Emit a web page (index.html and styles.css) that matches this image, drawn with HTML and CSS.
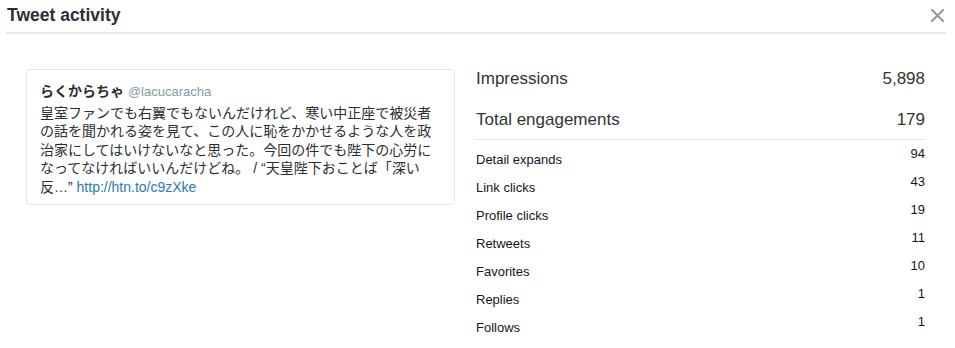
FILE: index.html
```html
<!DOCTYPE html>
<html lang="ja">
<head>
    <meta charset="UTF-8">
    <meta name="viewport" content="width=device-width, initial-scale=1.0">
    <title>Tweet activity</title>

    <link rel="stylesheet" href="styles.css">
</head>
<body>
    <div class="modal">
        <header class="modal-header">
            <h2 class="modal-title">Tweet activity</h2>
            <button class="close-btn" type="button" aria-label="Close">
                <svg width="13" height="13" viewBox="0 0 13 13"><path d="M1 1 L12 12 M12 1 L1 12" stroke="#8899a6" stroke-width="2" stroke-linecap="round"/></svg>
            </button>
        </header>
        <div class="modal-body">
            <div class="tweet">
                <div class="tweet-user">
                    <span class="fullname">らくからちゃ</span>
                    <span class="username">@lacucaracha</span>
                </div>
                <p class="tweet-text">皇室ファンでも右翼でもないんだけれど、寒い中正座で被災者の話を聞かれる姿を見て、この人に恥をかかせるような人を政治家にしてはいけないなと思った。今回の件でも陛下の心労になってなければいいんだけどね。 / “天皇陛下おことば「深い反…” <a href="#">http://htn.to/c9zXke</a></p>
            </div>
            <div class="stats">
                <div class="main-metric">
                    <span>Impressions</span>
                    <span>5,898</span>
                </div>
                <div class="main-metric total">
                    <span>Total engagements</span>
                    <span>179</span>
                </div>
                <ul class="detail-list">
                    <li><span class="label">Detail expands</span><span class="count">94</span></li>
                    <li><span class="label">Link clicks</span><span class="count">43</span></li>
                    <li><span class="label">Profile clicks</span><span class="count">19</span></li>
                    <li><span class="label">Retweets</span><span class="count">11</span></li>
                    <li><span class="label">Favorites</span><span class="count">10</span></li>
                    <li><span class="label">Replies</span><span class="count">1</span></li>
                    <li><span class="label">Follows</span><span class="count">1</span></li>
                </ul>
            </div>
        </div>
    </div>
</body>
</html>
```

FILE: styles.css
```css
*{
    margin: 0;
    padding: 0;
    box-sizing: border-box;
}
body{
    background: #fff;
    font-family: "Liberation Sans", Arial, "Noto Sans CJK JP", sans-serif;
    color: #292f33;
}
.modal-header{
    display: flex;
    align-items: center;
    justify-content: space-between;
    height: 34px;
    margin: 0 9px 0 6px;
    padding: 0 2px 2px 1px;
    border-bottom: 2px solid #e1e8ed;
}
.modal-title{
    font-size: 17.5px;
    font-weight: bold;
    color: #292f33;
    line-height: 22px;
}
.close-btn{
    border: none;
    background: none;
    width: 13px;
    height: 13px;
    display: flex;
    cursor: pointer;
}
.modal-body{
    display: flex;
    align-items: flex-start;
    gap: 21px;
    padding: 35px 30px 0 26px;
}
.tweet{
    width: 429px;
    border: 1px solid #e1e8ed;
    border-radius: 4px;
    padding: 12px 21px 8px 13px;
    font-size: 14px;
    line-height: 18.5px;
}
.tweet .fullname{
    font-weight: bold;
    color: #292f33;
}
.tweet .username{
    font-size: 13px;
    color: #8899a6;
}
.tweet-text{
    margin-top: 2px;
    color: #292f33;
}
.tweet-text a{
    color: #2b7bb9;
    text-decoration: none;
}
.stats{
    flex: 1;
}
.main-metric{
    display: flex;
    justify-content: space-between;
    font-size: 17px;
    line-height: 20px;
    color: #333;
    margin-bottom: 21px;
}
.main-metric.total{
    margin-bottom: 0;
    padding-bottom: 9px;
    border-bottom: 1px solid #e1e8ed;
}
.detail-list{
    list-style: none;
}
.detail-list li{
    display: flex;
    justify-content: space-between;
    align-items: flex-start;
    height: 28px;
    font-size: 13px;
    line-height: 16px;
    color: #14171a;
}
.detail-list .label{
    padding-top: 12px;
}
.detail-list .count{
    padding-top: 6px;
}
```
